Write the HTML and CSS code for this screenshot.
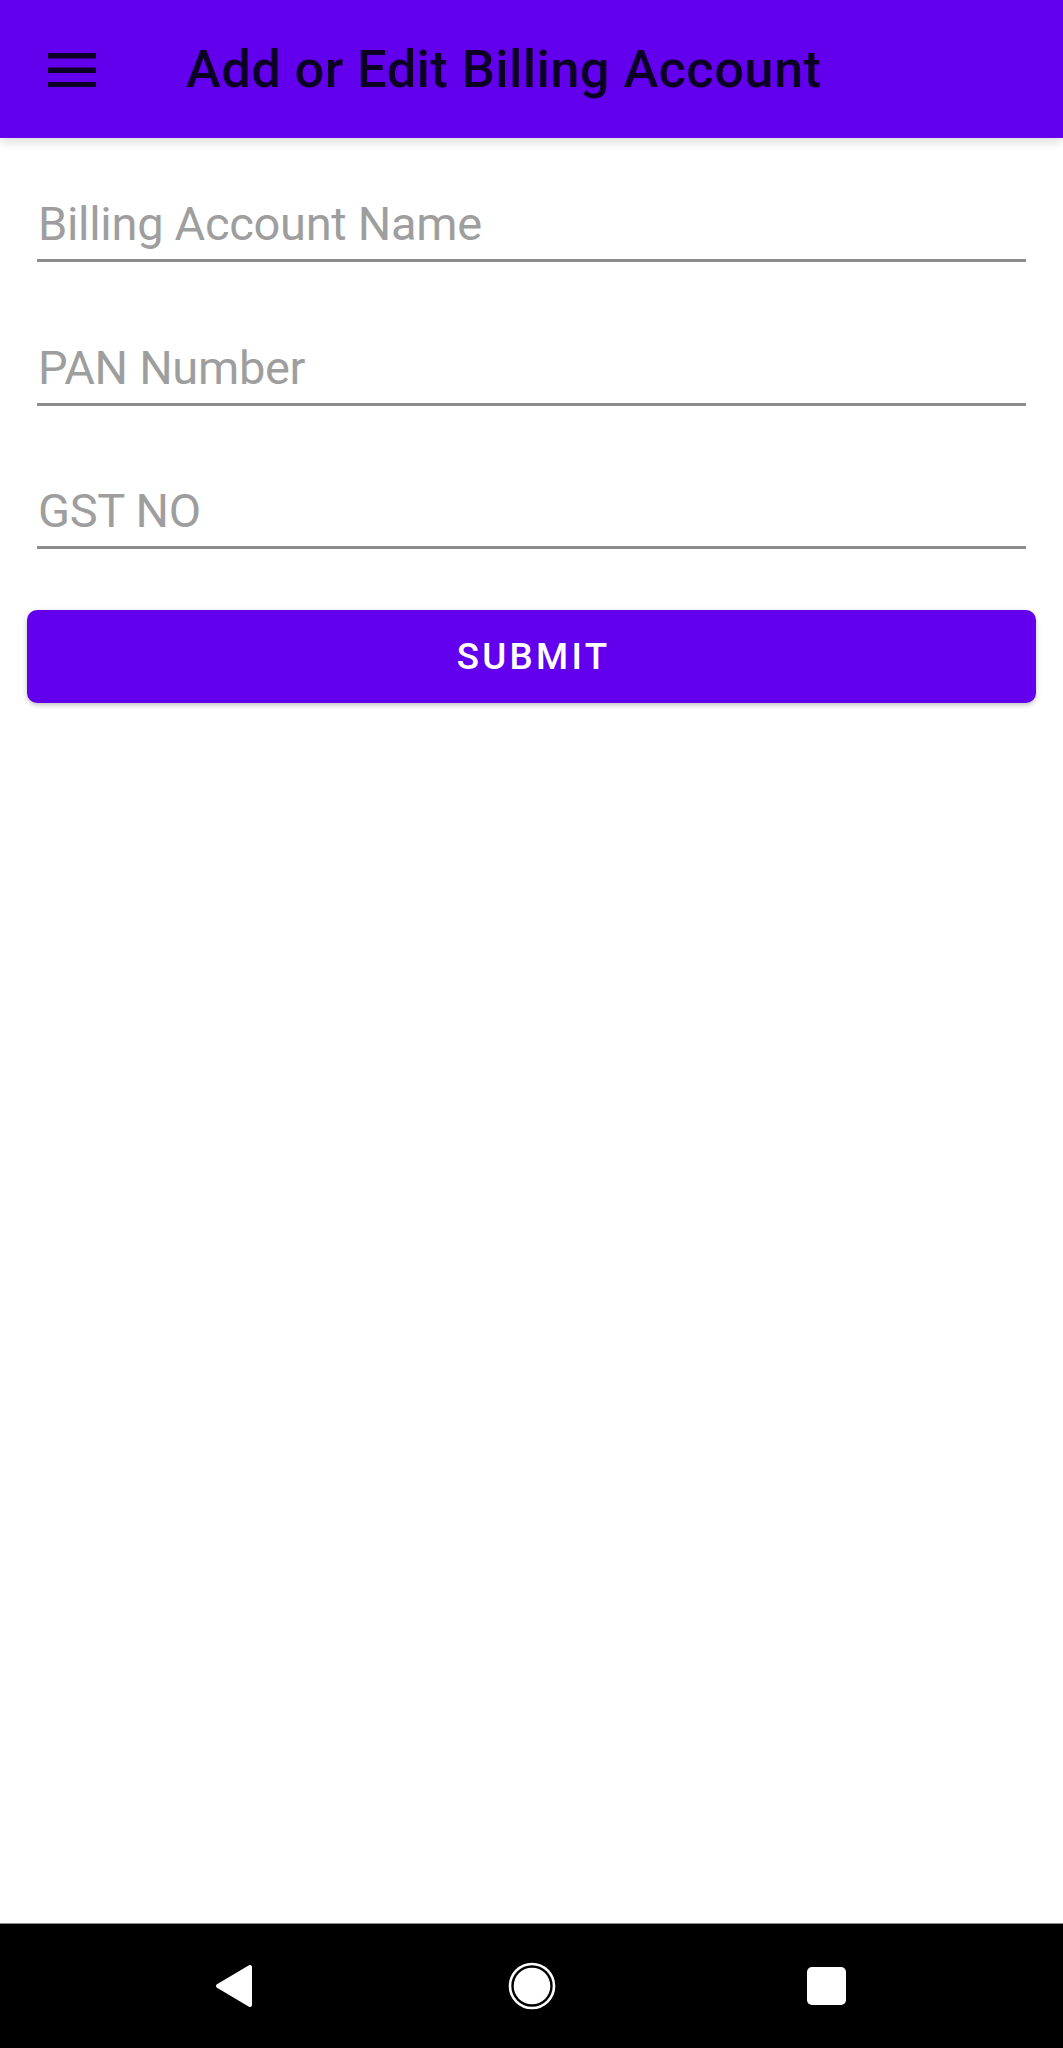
FILE: index.html
```html
<!DOCTYPE html>
<html lang="en">
<head>
<meta charset="utf-8">
<title>Add or Edit Billing Account</title>
<link rel="stylesheet" href="styles.css">
</head>
<body>
<div class="screen">
  <header class="appbar">
    <svg class="menu-icon" width="48" height="34" viewBox="0 0 48 34" aria-hidden="true">
      <rect x="0" y="0" width="48" height="5.5" fill="#0c0024"/>
      <rect x="0" y="14.5" width="48" height="5.5" fill="#0c0024"/>
      <rect x="0" y="29" width="48" height="5.5" fill="#0c0024"/>
    </svg>
    <h1 class="title">Add or Edit Billing Account</h1>
  </header>

  <main class="form">
    <div class="field"><span class="hint">Billing Account Name</span></div>
    <div class="field"><span class="hint">PAN Number</span></div>
    <div class="field"><span class="hint">GST NO</span></div>
    <button class="submit" type="button">SUBMIT</button>
  </main>

  <nav class="navbar">
    <svg class="nav-back" width="38" height="44" viewBox="0 0 38 44" aria-hidden="true">
      <polygon points="3,22 35,3 35,41" fill="#fff" stroke="#fff" stroke-width="4" stroke-linejoin="round"/>
    </svg>
    <svg class="nav-home" width="48" height="48" viewBox="0 0 48 48" aria-hidden="true">
      <circle cx="24" cy="24" r="22" fill="none" stroke="#fff" stroke-width="2.6"/>
      <circle cx="24" cy="24" r="18.3" fill="#fff"/>
    </svg>
    <div class="nav-recent"></div>
  </nav>
</div>
</body>
</html>
```

FILE: styles.css
```css
* { box-sizing: border-box; }

html, body {
  margin: 0;
  padding: 0;
  background: #ffffff;
}

body {
  font-family: Roboto, "Liberation Sans", Arial, sans-serif;
}

.screen {
  width: 1063px;
  height: 2048px;
  display: flex;
  flex-direction: column;
  overflow: hidden;
}

.appbar {
  height: 138px;
  flex: 0 0 138px;
  background: #6200ee;
  display: flex;
  align-items: center;
  padding-left: 48px;
  box-shadow: 0 3px 10px rgba(0, 0, 0, 0.16);
  position: relative;
  z-index: 1;
}

.menu-icon {
  flex: 0 0 auto;
  margin-top: 2px;
}

.title {
  margin: 0 0 0 90px;
  font-size: 52.5px;
  font-weight: 500;
  color: #0c0024;
  line-height: 1;
  letter-spacing: 0.38px;
}

.form {
  flex: 1 1 auto;
  display: flex;
  flex-direction: column;
  padding: 58px 27px 0 27px;
}

.field {
  margin: 0 10px 77.5px 10px;
  height: 66px;
  padding-bottom: 7px;
  border-bottom: 3px solid #8c8c8c;
  display: flex;
  align-items: flex-end;
}

.field:nth-child(3) {
  margin-bottom: 61px;
}

.hint {
  font-size: 47px;
  line-height: 56px;
  color: #9e9e9e;
  font-weight: 400;
  margin-left: 1px;
  letter-spacing: -0.3px;
}

.submit {
  height: 93px;
  width: 1009px;
  border: none;
  border-radius: 10px;
  background: #6200ee;
  color: #ffffff;
  font-family: Roboto, "Liberation Sans", Arial, sans-serif;
  font-size: 36.75px;
  font-weight: 500;
  letter-spacing: 3.3px;
  box-shadow: 0 2px 5px rgba(0, 0, 0, 0.25);
  display: flex;
  align-items: center;
  justify-content: center;
  padding: 0 0 0 4px;
}

.navbar {
  flex: 0 0 125px;
  height: 125px;
  background: #000000;
  border-top: 1px solid #8a8a8a;
  display: flex;
  align-items: center;
  padding-left: 215px;
}

.nav-back {
  flex: 0 0 auto;
}

.nav-home {
  flex: 0 0 auto;
  margin-left: 255px;
}

.nav-recent {
  flex: 0 0 auto;
  width: 39px;
  height: 38px;
  background: #ffffff;
  border-radius: 5px;
  margin-left: 251px;
}
```
